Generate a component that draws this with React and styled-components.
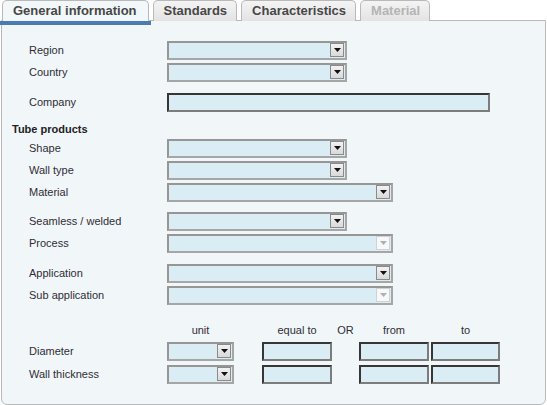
import React from "react";
import styled, { createGlobalStyle } from "styled-components";

const GlobalStyle = createGlobalStyle`
    body {
        margin: 0;
        background: #ffffff;
        font-family: "Liberation Sans", Arial, sans-serif;
    }
`;

const selects = [
    { label: "Region", width: 180, gap: 0 },
    { label: "Country", width: 180, gap: 2 },
];

const tubeRows = [
    { label: "Shape", width: 180, gap: 2 },
    { label: "Wall type", width: 180, gap: 2 },
    { label: "Material", width: 226, gap: 2 },
    { label: "Seamless / welded", width: 180, gap: 9 },
    { label: "Process", width: 226, gap: 2, disabled: true },
    { label: "Application", width: 226, gap: 10 },
    { label: "Sub application", width: 226, gap: 2, disabled: true },
];

function Select({ width, disabled }) {
    return (
        <SelectBox $width={width}>
            <DropButton $disabled={disabled}>
                <svg width="7" height="4" viewBox="0 0 7 4">
                    <path d="M0 0h7L3.5 4z" fill={disabled ? "#b0b0b0" : "#111"} />
                </svg>
            </DropButton>
        </SelectBox>
    );
}

function App() {
    return (
        <>
            <GlobalStyle />
            <Page>
                <Tabs>
                    <Tab $active>General information</Tab>
                    <Tab>Standards</Tab>
                    <Tab>Characteristics</Tab>
                    <Tab $disabled>Material</Tab>
                </Tabs>
                <Panel>
                    {selects.map((s) => (
                        <Row key={s.label} $gap={s.gap}>
                            <Label>{s.label}</Label>
                            <Select width={s.width} />
                        </Row>
                    ))}
                    <Row $gap={10}>
                        <Label>Company</Label>
                        <TextInput $width={323} />
                    </Row>
                    <Heading>Tube products</Heading>
                    {tubeRows.map((s) => (
                        <Row key={s.label} $gap={s.gap}>
                            <Label>{s.label}</Label>
                            <Select width={s.width} disabled={s.disabled} />
                        </Row>
                    ))}
                    <HeaderRow>
                        <Label />
                        <ColHead $width={67}>unit</ColHead>
                        <ColHead $width={70} $left={28}>equal to</ColHead>
                        <ColHead $width={27}>OR</ColHead>
                        <ColHead $width={70}>from</ColHead>
                        <ColHead $width={69} $left={2}>to</ColHead>
                    </HeaderRow>
                    {["Diameter", "Wall thickness"].map((name, i) => (
                        <Row key={name} $gap={i === 0 ? 4 : 3}>
                            <Label>{name}</Label>
                            <Select width={67} />
                            <TextInput $width={70} $left={28} />
                            <Spacer />
                            <TextInput $width={70} />
                            <TextInput $width={69} $left={2} />
                        </Row>
                    ))}
                </Panel>
            </Page>
        </>
    );
}

const Page = styled.div`
    width: 547px;
    height: 405px;
    position: relative;
`;
const Tabs = styled.div`
    display: flex;
    align-items: flex-end;
    gap: 4px;
    height: 21px;
    padding-left: 2px;
    position: relative;
    z-index: 1;
`;
const Tab = styled.div`
    position: relative;
    height: 20px;
    line-height: 20px;
    padding: 0 ${(p) => (p.$active ? "11px" : "9px")} 0 10px;
    border: 1px solid #b9b9b9;
    border-bottom: none;
    border-radius: 5px 5px 0 0;
    background: ${(p) =>
        p.$active ? "#f2f7f9" : "linear-gradient(#f4f4f4, #e3e3e3)"};
    color: ${(p) => (p.$disabled ? "#b4b4b4" : "#474747")};
    font-size: 13px;
    font-weight: bold;
    white-space: nowrap;
    &::after {
        content: "";
        display: ${(p) => (p.$active ? "block" : "none")};
        position: absolute;
        left: -3px;
        right: -3px;
        bottom: -4px;
        height: 4px;
        background: #4b7bb3;
    }
`;
const Panel = styled.div`
    margin: -1px 1px 0 1px;
    height: 364px;
    padding: 19px 0 0 27px;
    border: 1px solid #b9b9b9;
    border-radius: 0 0 6px 6px;
    background: #f1f7f9;
`;
const Row = styled.div`
    display: flex;
    align-items: center;
    height: 20px;
    margin-top: ${(p) => p.$gap}px;
`;
const Label = styled.div`
    width: 138px;
    flex-shrink: 0;
    font-size: 11px;
    color: #2f2c36;
`;
const Heading = styled.div`
    margin: 10px 0 0 -17px;
    height: 14px;
    line-height: 14px;
    font-size: 11px;
    font-weight: bold;
    color: #222;
`;
const SelectBox = styled.div`
    box-sizing: border-box;
    width: ${(p) => p.$width}px;
    height: 19px;
    display: flex;
    justify-content: flex-end;
    align-items: center;
    padding-right: 1px;
    border: 2px solid #a6a6a6;
    border-top-color: #969696;
    border-left-color: #969696;
    background: #dbedf4;
`;
const DropButton = styled.div`
    box-sizing: border-box;
    width: 14px;
    height: 14px;
    display: flex;
    align-items: center;
    justify-content: center;
    border: 1px solid ${(p) => (p.$disabled ? "#d2d2d2" : "#8a8a8a")};
    background: ${(p) =>
        p.$disabled ? "#f6f8f9" : "linear-gradient(#f2f2f2, #d9d9d9)"};
`;
const TextInput = styled.div`
    box-sizing: border-box;
    width: ${(p) => p.$width}px;
    height: 19px;
    margin-left: ${(p) => p.$left || 0}px;
    border: 2px solid #7c7c7c;
    border-top-color: #363636;
    border-left-color: #363636;
    background: #dbedf4;
`;
const Spacer = styled.div`
    width: 27px;
`;
const HeaderRow = styled.div`
    display: flex;
    height: 14px;
    line-height: 14px;
    margin-top: 18px;
`;
const ColHead = styled.div`
    width: ${(p) => p.$width}px;
    margin-left: ${(p) => p.$left || 0}px;
    text-align: center;
    font-size: 11px;
    color: #2f2c36;
`;

export default App;
